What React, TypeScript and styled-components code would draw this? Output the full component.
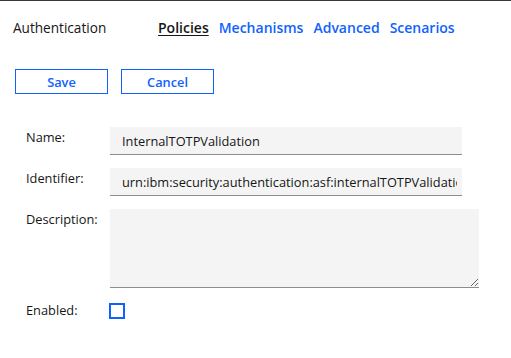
import React from "react";
import styled, { createGlobalStyle } from "styled-components";

const GlobalStyle = createGlobalStyle`
  html, body { margin: 0; padding: 0; background: #ffffff; }
  body { font-family: "Open Sans", "Noto Sans", sans-serif; color: #161616; }
  * { box-sizing: border-box; }
`;

const Page = styled.div`
  border-top: 1px solid #393939;
  width: 511px;
  min-height: 357px;
`;

const Header = styled.header`
  display: flex;
  align-items: baseline;
  padding: 18px 0 0 13px;
  height: 37px;
`;

const Title = styled.div`
  width: 145px;
  font-size: 13.6px;
  line-height: 18px;
  color: #161616;
`;

const Nav = styled.nav`
  display: flex;
  gap: 10px;
`;

const NavLink = styled.a<{ $active?: boolean }>`
  font-size: 14px;
  line-height: 18px;
  font-weight: 600;
  cursor: pointer;
  color: ${(p) => (p.$active ? "#161616" : "#0f62fe")};
  text-decoration: ${(p) => (p.$active ? "underline" : "none")};
  text-underline-offset: 2px;
  text-decoration-thickness: 1px;
`;

const Actions = styled.div`
  display: flex;
  gap: 13px;
  padding: 31px 0 0 15px;
`;

const Button = styled.button`
  width: 93px;
  height: 25px;
  border: 1px solid #0f62fe;
  background: #ffffff;
  color: #0f62fe;
  font-family: "Open Sans", sans-serif;
  font-size: 12.8px;
  font-weight: 600;
  padding: 0;
  cursor: pointer;
`;

const Form = styled.div`
  display: grid;
  grid-template-columns: 84px auto;
  row-gap: 13px;
  padding: 33px 0 0 26px;
  justify-content: start;
`;

const Label = styled.label<{ $center?: boolean }>`
  font-size: 12.8px;
  line-height: 17px;
  color: #161616;
  padding-top: ${(p) => (p.$center ? "0" : "2px")};
  align-self: ${(p) => (p.$center ? "center" : "start")};
`;

const TextInput = styled.input`
  display: block;
  width: 352px;
  height: 28px;
  border: none;
  border-bottom: 1px solid #8d8d8d;
  background: #f4f4f4;
  padding: 0 5px 0 12px;
  font-family: "Open Sans", sans-serif;
  font-size: 12.8px;
  color: #161616;
  outline: none;
`;

const TextArea = styled.textarea`
  display: block;
  width: 369px;
  height: 79px;
  border: none;
  border-bottom: 1px solid #8d8d8d;
  background: #f4f4f4;
  padding: 8px 12px;
  font-family: "Open Sans", sans-serif;
  font-size: 12.8px;
  color: #161616;
  outline: none;
  resize: both;
`;

const CheckBox = styled.span`
  display: block;
  width: 16px;
  height: 16px;
  margin: 2px 0 0 -1px;
  border: 2px solid #0f62fe;
  background: #ffffff;
`;

export default function App() {
  return (
    <Page>
      <GlobalStyle />
      <Header>
        <Title>Authentication</Title>
        <Nav>
          <NavLink $active>Policies</NavLink>
          <NavLink>Mechanisms</NavLink>
          <NavLink>Advanced</NavLink>
          <NavLink>Scenarios</NavLink>
        </Nav>
      </Header>
      <Actions>
        <Button>Save</Button>
        <Button>Cancel</Button>
      </Actions>
      <Form>
        <Label>Name:</Label>
        <TextInput defaultValue="InternalTOTPValidation" />
        <Label>Identifier:</Label>
        <TextInput defaultValue="urn:ibm:security:authentication:asf:internalTOTPValidation" />
        <Label>Description:</Label>
        <TextArea defaultValue="" />
        <Label $center>Enabled:</Label>
        <CheckBox role="checkbox" aria-checked="false" />
      </Form>
    </Page>
  );
}
